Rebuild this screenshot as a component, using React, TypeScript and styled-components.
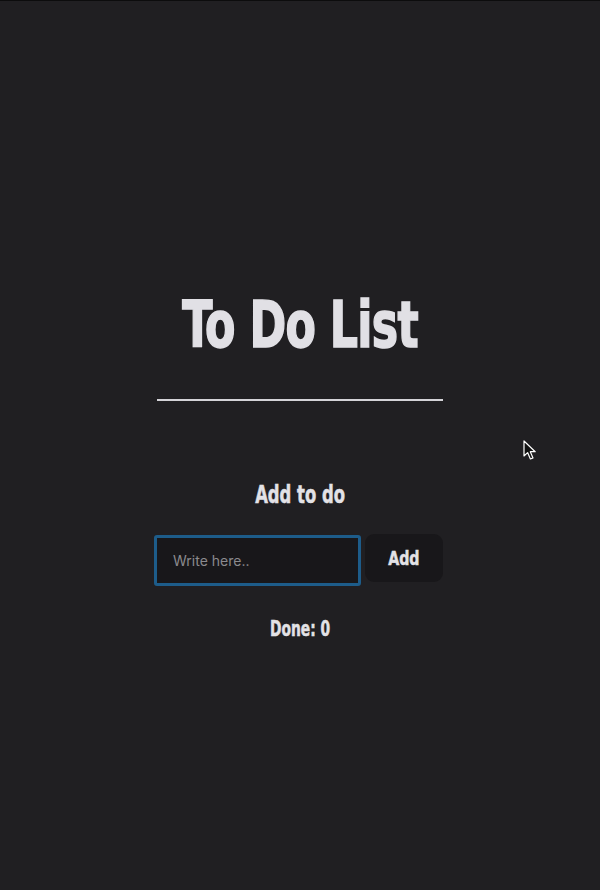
import styled, { createGlobalStyle } from "styled-components";

const GlobalStyle = createGlobalStyle`
  html, body {
    margin: 0;
    padding: 0;
    background-color: #201f22;
  }
`;

const heading = `Impact, "Liberation Sans Narrow", "DejaVu Sans Condensed", "Arial Narrow", sans-serif`;

const Page = styled.main`
  position: relative;
  box-sizing: border-box;
  min-height: 890px;
  border-top: 1px solid #0c0c0d;
  background-color: #201f22;
  display: flex;
  flex-direction: column;
  align-items: center;
  padding-top: 292px;
  color: #e3e2e6;
  font-family: ${heading};
`;

// condensed heavy type, squeezed to get close to Impact
const Squeeze = styled.span<{ $x: number }>`
  display: inline-block;
  transform: scaleX(${(p) => p.$x});
`;

const Title = styled.h1`
  margin: 0;
  font-size: 64px;
  line-height: 64px;
  font-weight: 700;
  letter-spacing: -1px;
  color: #e1e0e5;
  -webkit-text-stroke: 1.5px #e1e0e5;
`;

const Divider = styled.hr`
  width: 286px;
  height: 2px;
  margin: 42px 0 0;
  border: none;
  background-color: #d4d3d8;
`;

const SubTitle = styled.h2`
  margin: 80px 0 0;
  font-size: 24px;
  line-height: 28px;
  font-weight: 700;
  -webkit-text-stroke: 0.5px #e3e2e6;
`;

const Form = styled.form`
  display: flex;
  align-items: flex-start;
  gap: 4px;
  margin: 26px 3px 0 0;
`;

const Input = styled.input`
  box-sizing: border-box;
  width: 207px;
  height: 51px;
  padding: 0 16px;
  border: 3px solid #1d5c8a;
  border-radius: 3px;
  background-color: #18171a;
  color: #e3e2e6;
  font-family: Inter, "Noto Sans", sans-serif;
  font-size: 14px;
  outline: none;

  &::placeholder {
    color: #8b8a8e;
  }
`;

const AddButton = styled.button`
  box-sizing: border-box;
  width: 78px;
  height: 48px;
  margin-top: -1px;
  border: none;
  border-radius: 9px;
  background-color: #18171a;
  color: #e3e2e6;
  font-family: ${heading};
  font-size: 20px;
  font-weight: 700;
  -webkit-text-stroke: 0.5px #e3e2e6;
  cursor: pointer;
`;

const DoneCount = styled.p`
  margin: 30px 0 0;
  font-size: 21px;
  line-height: 26px;
  font-weight: 700;
  -webkit-text-stroke: 0.5px #e3e2e6;
`;

const Cursor = styled.svg`
  position: absolute;
  left: 523px;
  top: 439px;
  width: 15px;
  height: 22px;
`;

export default function App() {
  return (
    <>
      <GlobalStyle />
      <Page>
        <Title>
          <Squeeze $x={0.77}>To Do List</Squeeze>
        </Title>
        <Divider />
        <SubTitle>
          <Squeeze $x={0.76}>Add to do</Squeeze>
        </SubTitle>
        <Form onSubmit={(e) => e.preventDefault()}>
          <Input placeholder="Write here.." />
          <AddButton type="submit">
            <Squeeze $x={0.79}>Add</Squeeze>
          </AddButton>
        </Form>
        <DoneCount>
          <Squeeze $x={0.73}>Done: 0</Squeeze>
        </DoneCount>
        <Cursor viewBox="0 0 15 22">
          <path
            d="M1 1 L1 16 L4.6 12.6 L7.4 19 L10 17.9 L7.3 11.7 L12.2 11.7 Z"
            fill="#111"
            stroke="#fff"
            strokeWidth="1.2"
            strokeLinejoin="round"
          />
        </Cursor>
      </Page>
    </>
  );
}
